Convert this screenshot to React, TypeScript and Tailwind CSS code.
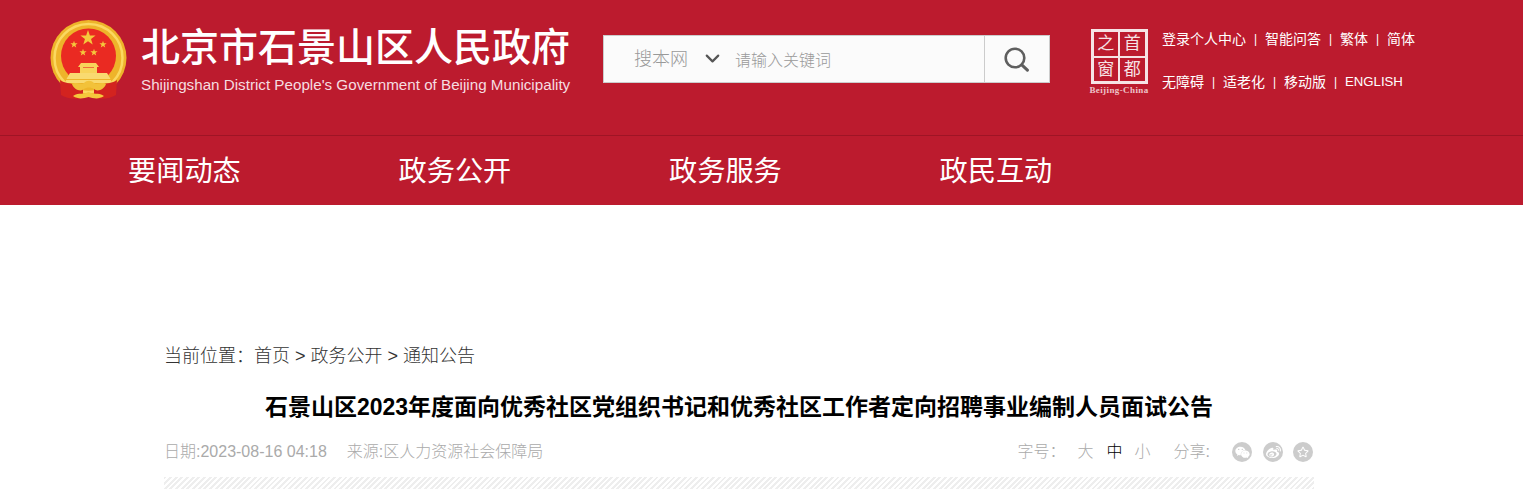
import { ChevronDown } from "lucide-react";
import { FaRegStar, FaWeibo, FaWeixin } from "react-icons/fa";

const cjk = "font-['Liberation_Sans','Noto_Sans_CJK_SC',sans-serif]";

const topLinks = [
  ["登录个人中心", "智能问答", "繁体", "简体"],
  ["无障碍", "适老化", "移动版", "ENGLISH"],
];

const navItems = ["要闻动态", "政务公开", "政务服务", "政民互动"];

function Star({ x, y, r, fill = "#f5c83c" }: { x: number; y: number; r: number; fill?: string }) {
  const pts = Array.from({ length: 10 }, (_, i) => {
    const a = (Math.PI / 5) * i - Math.PI / 2;
    const d = i % 2 === 0 ? r : r * 0.4;
    return `${(x + d * Math.cos(a)).toFixed(2)},${(y + d * Math.sin(a)).toFixed(2)}`;
  }).join(" ");
  return <polygon points={pts} fill={fill} />;
}

function Emblem() {
  return (
    <svg width="80" height="84" viewBox="0 0 80 84" className="shrink-0">
      <circle cx="38.5" cy="38" r="38" fill="#eeb42a" />
      <circle cx="38.5" cy="38" r="34" fill="none" stroke="#fbd860" strokeWidth="2.5" />
      <circle cx="38.5" cy="36" r="27.5" fill="#ea2a22" />
      <Star x={38} y={18} r={8} />
      <Star x={24} y={24.5} r={3.8} />
      <Star x={53} y={24.5} r={3.8} />
      <Star x={33} y={32.5} r={3.8} />
      <Star x={44} y={32.5} r={3.8} />
      <path d="M28 47 L31 43 H46 L49 47 H47 V53 H30 V47Z" fill="#f8d35a" />
      <rect x="33" y="47" width="11" height="1" fill="#ea2a22" opacity="0.6" />
      <path d="M20 53 H57 L60 58 L62 63 H15 L17 58Z" fill="#f9da70" />
      <rect x="15" y="59" width="47" height="1" fill="#eeb42a" />
      <path d="M10 60 C15 64 20 62 24 65 C28 69 31 69 33 68 L33 78 C24 80 16 78 11 75 Z" fill="#d3231f" />
      <path d="M67 60 C62 64 57 62 53 65 C49 69 46 69 44 68 L44 78 C53 80 61 78 66 75 Z" fill="#d3231f" />
      <path d="M22 64 C27 61 31 66 34 63 C37 60 41 60 44 63 C47 66 51 61 56 64 C54 70 47 72 44 69 C41 67 37 67 34 69 C31 72 24 70 22 64Z" fill="#f2c23a" />
      <path d="M23 76 C29 72 34 75 38.5 72 C43 75 48 72 54 76 C48 80 43 78 38.5 77 C34 78 29 80 23 76Z" fill="#f5c83c" />
    </svg>
  );
}

function CapitalLogo() {
  return (
    <div className="flex w-[62px] shrink-0 flex-col items-center">
      <div className="grid h-[55px] w-[57px] grid-cols-2 grid-rows-2 gap-[2px] border-[3px] border-[#f6e3e5] bg-[#f6e3e5]">
        {["之", "首", "窗", "都"].map((char) => (
          <span
            key={char}
            className={`flex items-center justify-center bg-[#bc1b2e] text-[17px] leading-none text-[#f6e3e5] ${cjk}`}
          >
            {char}
          </span>
        ))}
      </div>
      <span className="mt-[1px] whitespace-nowrap font-['Liberation_Serif',serif] text-[9px] font-bold leading-[11px] tracking-[0.4px] text-[#eec4c9]">
        Beijing-China
      </span>
    </div>
  );
}

function SearchBox() {
  return (
    <div className="ml-[33px] mt-[35px] flex h-[48px] w-[447px] shrink-0 border border-[#cccccc] bg-[#fbfbfb]">
      <span className="ml-[30px] w-[54px] text-[18px] font-light leading-[46px] text-[#999999]">搜本网</span>
      <ChevronDown className="ml-[13px] mt-[11px] h-[23px] w-[23px] text-[#555555]" strokeWidth={2.25} />
      <span className="ml-[11px] w-[249px] text-[16px] font-light leading-[49px] text-[#999999]">请输入关键词</span>
      <div className="flex flex-1 items-center justify-center border-l border-[#cccccc] pr-[2px]">
        <svg width="26" height="26" viewBox="0 0 26 26" fill="none" stroke="#5f5f5f">
          <circle cx="12" cy="12" r="9.3" strokeWidth="2.6" />
          <path d="M18.8 18.8 L24.4 24.2" strokeWidth="3" strokeLinecap="round" />
        </svg>
      </div>
    </div>
  );
}

function TopLinks() {
  return (
    <div className="ml-[12px] mt-[28px] flex flex-col gap-[21px] text-[14px] leading-[22px] text-white">
      {topLinks.map((row, rowIndex) => (
        <div key={rowIndex} className="flex whitespace-nowrap">
          {row.map((link, index) => (
            <span key={link} className="flex">
              {index > 0 && <span className="w-[19px] text-center text-[12px]">|</span>}
              <span className={link === "ENGLISH" ? "text-[13.2px] font-light" : ""}>{link}</span>
            </span>
          ))}
        </div>
      ))}
    </div>
  );
}

export default function App() {
  return (
    <div className={`h-[494px] w-full overflow-hidden bg-white ${cjk}`}>
      <header className="bg-[#bc1b2e]">
        <div className="flex h-[136px] border-b border-[#9f1425] pl-[50px]">
          <div className="mt-[20px]">
            <Emblem />
          </div>
          <div className="ml-[11px] mt-[25px] w-[429px]">
            <h1 className="whitespace-nowrap text-[39px] font-medium leading-[46px] text-white">北京市石景山区人民政府</h1>
            <p className="mt-[5px] whitespace-nowrap font-['Liberation_Sans',sans-serif] text-[15.2px] leading-[18px] text-[#f6dde0]">
              Shijingshan District People's Government of Beijing Municipality
            </p>
          </div>
          <SearchBox />
          <div className="ml-[38px] mt-[29px]">
            <CapitalLogo />
          </div>
          <TopLinks />
        </div>
        <nav className="flex h-[69px] pl-[128px]">
          {navItems.map((item) => (
            <a key={item} className="w-[270.5px] text-[28.2px] leading-[71px] text-white">
              {item}
            </a>
          ))}
        </nav>
      </header>

      <main className="ml-[164px] w-[1150px] pt-[139px]">
        <div className="text-[18px] font-light leading-[24px] text-[#333333]">当前位置：首页 &gt; 政务公开 &gt; 通知公告</div>
        <h2 className="mt-[24px] text-center text-[23px] font-bold leading-[30px] text-black">
          石景山区2023年度面向优秀社区党组织书记和优秀社区工作者定向招聘事业编制人员面试公告
        </h2>
        <div className="mt-[17px] flex h-[26px] items-center text-[16px] font-light text-[#aaaaaa]">
          <span>日期:2023-08-16 04:18</span>
          <span className="ml-[20px]">来源:区人力资源社会保障局</span>
          <span className="ml-auto">字号：</span>
          <span className="ml-[12px]">大</span>
          <span className="ml-[13px] text-black">中</span>
          <span className="ml-[12px]">小</span>
          <span className="ml-[23px]">分享:</span>
          <span className="ml-[22px] flex h-[20px] w-[20px] items-center justify-center rounded-full bg-[#cccccc] text-white">
            <FaWeixin className="h-[15px] w-[15px]" />
          </span>
          <span className="ml-[11px] flex h-[20px] w-[20px] items-center justify-center rounded-full bg-[#cccccc] text-white">
            <FaWeibo className="h-[15px] w-[15px]" />
          </span>
          <span className="ml-[10px] mr-[1px] flex h-[20px] w-[20px] items-center justify-center rounded-full bg-[#cccccc] text-white">
            <FaRegStar className="h-[12px] w-[12px]" />
          </span>
        </div>
        <div className="mt-[12px] h-[12px] bg-[repeating-linear-gradient(135deg,#eeeeee_0px,#eeeeee_2px,#ffffff_2px,#ffffff_4px)]" />
      </main>
    </div>
  );
}
